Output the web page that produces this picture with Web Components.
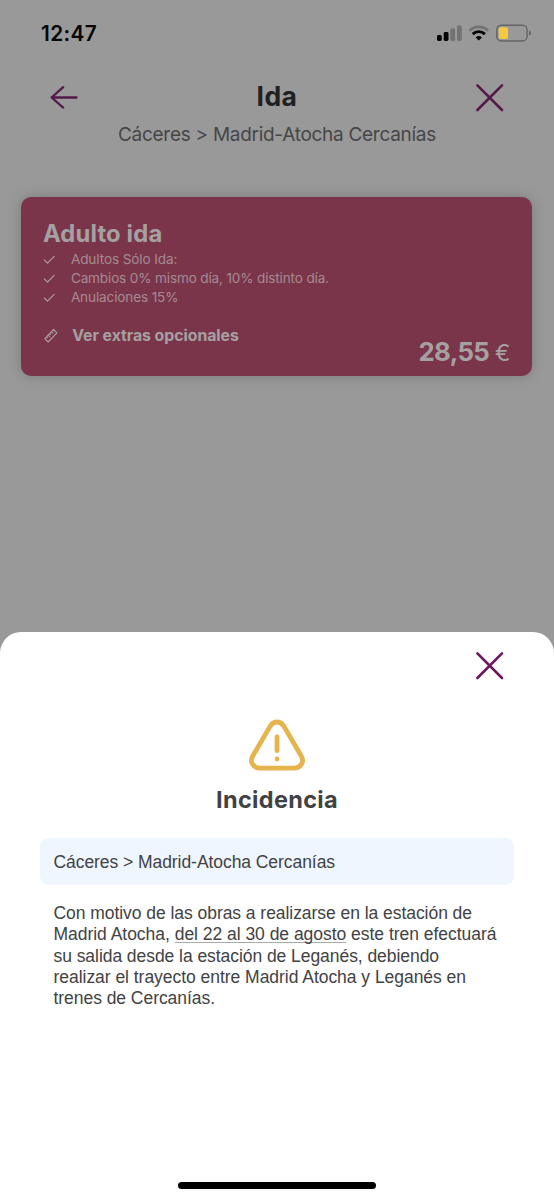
<!DOCTYPE html>
<html lang="es">
<head>
<meta charset="utf-8">
<title>Ida</title>
<style>
html,body{margin:0;height:1200px;overflow:hidden;background:#999}
body{font-family:Inter,"Liberation Sans",sans-serif}
</style>
</head>
<body>
<trip-screen></trip-screen>
<script>
const define=(name,html,setup)=>{
  const t=document.createElement('template');
  t.innerHTML=html;
  customElements.define(name,class extends HTMLElement{
    connectedCallback(){
      if(this.shadowRoot)return;
      this.attachShadow({mode:'open'}).append(t.content.cloneNode(true));
      if(setup)setup(this);
    }
  });
};

// Single line of text, tracked so that it fills the given measure.
define('tracked-text',`<style>:host{display:block;white-space:nowrap;width:max-content}span{display:inline-block}</style><span><slot></slot></span>`,el=>{
  const target=+el.getAttribute('measure');
  const span=el.shadowRoot.querySelector('span');
  const w=span.getBoundingClientRect().width;
  const n=[...el.textContent].length;
  span.style.letterSpacing=(target-w)/n+'px';
});

define('close-icon',`<style>:host{display:block;width:30px;height:30px}svg{display:block}</style>
<svg width="30" height="30" viewBox="0 0 30 30" fill="none" stroke="currentColor" stroke-width="2.6" stroke-linecap="round"><path d="M2.4 2.4 27 27M27 2.4 2.4 27"/></svg>`);

define('status-bar',`<style>
:host{display:flex;justify-content:space-between;height:68px;box-sizing:border-box;padding:21px 23px 0 41px;color:#060606}
.time{font-size:20.8px;font-weight:600;line-height:25px}
svg{display:block}
</style>
<tracked-text class="time" measure="56">12:47</tracked-text>
<svg width="96" height="26" viewBox="0 0 96 26" fill="none">
<g fill="#050505"><rect x="2" y="14" width="4.8" height="6" rx="1.4"/><rect x="8.7" y="11" width="4.8" height="9" rx="1.4"/></g>
<g fill="#737373"><rect x="15.3" y="7.6" width="4.8" height="12.4" rx="1.4"/><rect x="22" y="4.4" width="4.8" height="15.6" rx="1.4"/></g>
<path d="M34.6 9.6A13.3 13.3 0 0 1 53 9.6" stroke="#737373" stroke-width="2.7"/>
<path d="M37.7 13.1A8.7 8.7 0 0 1 49.9 13.1" stroke="#050505" stroke-width="2.9"/>
<path d="M40.7 16.4A4.5 4.5 0 0 1 46.9 16.4L43.8 19.6Z" fill="#050505"/>
<rect x="61.7" y="4.2" width="30.4" height="15.8" rx="4.7" stroke="#646464" stroke-width="1.4"/>
<rect x="63.8" y="6.3" width="9.2" height="11.7" rx="2" fill="#f5c93d"/>
<path d="M94 9.4Q96 10.2 96 12.1T94 14.8Z" fill="#646464"/>
</svg>`);

define('trip-header',`<style>
:host{display:block;height:129px;box-sizing:border-box;color:#202022}
.row{display:grid;grid-template-columns:1fr auto 1fr;align-items:center;height:58px;padding:0 49px}
.back{display:block}
close-icon{justify-self:end;color:#55194b;margin-top:1px}
.title{font-size:26.5px;line-height:34px;font-weight:750;align-self:start;margin-top:11px}
.route{font-size:19px;line-height:24px;margin:-3px auto 0;color:#464648}
</style>
<div class="row">
<svg class="back" width="30" height="26" viewBox="0 0 30 26" fill="none" stroke="#55194b" stroke-width="2.3" stroke-linecap="round" stroke-linejoin="round"><path d="M27.5 13.5H2.6M14.2 3.2 2.6 13.5 14.2 23.6"/></svg>
<tracked-text class="title" measure="41">Ida</tracked-text>
<close-icon></close-icon>
</div>
<tracked-text class="route" measure="318">Cáceres &gt; Madrid-Atocha Cercanías</tracked-text>`);

define('fare-condition',`<style>
:host{display:flex;height:19px;line-height:19px;font-size:13.6px;color:#a58a93}
svg{display:block;width:28px;margin-top:4px}
</style>
<svg width="28" height="12" viewBox="0 0 28 12" fill="none" stroke="#b0a0a5" stroke-width="1.1" stroke-linecap="round" stroke-linejoin="round"><path d="M1.2 5.8 4.5 9.2 11.2 2.4"/></svg>
<slot></slot>`);

define('fare-card',`<style>
:host{display:block;box-sizing:border-box;width:511px;height:179px;margin-left:21.4px;padding:21px 21.5px 0;border-radius:10px;background:#7b354a;color:#a5a0a2;box-shadow:0 0 13px rgba(0,0,0,.2)}
.name{font-size:23.8px;line-height:31px;font-weight:700;margin-bottom:1px}
.foot{display:flex;align-items:flex-start;padding-top:19px}
.foot svg{margin:2px 14.4px 0 1px}
.extras{font-size:15.8px;line-height:20px;font-weight:700}
.price{display:flex;margin:9.6px .5px 0 auto;line-height:32px;align-items:baseline}
.amount{font-size:25.8px;font-weight:700}
.euro{font-size:23px;margin-left:6px}
</style>
<tracked-text class="name" measure="119.5">Adulto ida</tracked-text>
<fare-condition><tracked-text measure="106.5">Adultos Sólo Ida:</tracked-text></fare-condition>
<fare-condition><tracked-text measure="258">Cambios 0% mismo día, 10% distinto día.</tracked-text></fare-condition>
<fare-condition><tracked-text measure="107.5">Anulaciones 15%</tracked-text></fare-condition>
<div class="foot">
<svg width="14" height="16" viewBox="0 0 14 16" fill="none" stroke="#aaa0a4" stroke-width="1.1" stroke-linejoin="round" stroke-linecap="round"><path d="M9.6 1.4 12.9 4.8 4.1 14 .8 10.7ZM7.5 3.7 9 5.2M5.8 5.5 6.7 6.4M4.1 7.2 5.6 8.7M2.4 9 3.3 9.9"/></svg>
<tracked-text class="extras" measure="166.5">Ver extras opcionales</tracked-text>
<div class="price"><tracked-text class="amount" measure="70.5">28,55</tracked-text><span class="euro">€</span></div>
</div>`);

define('incident-sheet',`<style>
:host{display:flex;flex-direction:column;box-sizing:border-box;height:568px;padding:19px 40px 0;border-radius:21px 21px 0 0;background:#fff;color:#424244}
close-icon{align-self:flex-end;margin-right:9.5px;color:#6d155e}
.warn{display:block;align-self:center;margin-top:38px}
.title{align-self:center;font-size:23.5px;line-height:30px;font-weight:700;margin-top:12px}
.route{box-sizing:border-box;width:474px;height:47.5px;margin-top:22.5px;padding:0 13.5px;line-height:49px;border-radius:9px;background:#eff6ff}
.route,.body{font-family:"Liberation Sans",Arial,sans-serif;font-size:17.5px}
.body{padding:17.8px 13.5px 0;line-height:21.4px}
.line{display:flex;height:21.4px}
u{text-decoration-color:#aaa;text-decoration-thickness:1px;text-underline-offset:2px;text-decoration-skip-ink:none}
.home{flex:none;width:198px;height:7px;border-radius:4px;background:#000;margin:auto auto 11px}
</style>
<close-icon></close-icon>
<svg class="warn" width="58" height="54" viewBox="0 0 58 54" fill="none" stroke="#e5b44d" stroke-width="4.8" stroke-linecap="round" stroke-linejoin="round"><path d="M22.5 6.6Q25 3 29 3T35.5 6.6L53.4 37.3Q55.8 41.8 53.4 45.2Q51 49.2 46.4 49.2H11.6Q7 49.2 4.6 45.2Q2.2 41.8 4.6 37.3Z"/><path d="M29 17.9V31.7"/><circle cx="29" cy="40" r="2.4" fill="#e5b44d" stroke="none"/></svg>
<tracked-text class="title" measure="122">Incidencia</tracked-text>
<div class="route"><tracked-text measure="281.5">Cáceres &gt; Madrid-Atocha Cercanías</tracked-text></div>
<div class="body">
<tracked-text class="line" measure="418.5">Con motivo de las obras a realizarse en la estación de</tracked-text>
<tracked-text class="line" measure="443">Madrid Atocha, <u>del 22 al 30 de agosto</u> este tren efectuará</tracked-text>
<tracked-text class="line" measure="385.5">su salida desde la estación de Leganés, debiendo</tracked-text>
<tracked-text class="line" measure="412.5">realizar el trayecto entre Madrid Atocha y Leganés en</tracked-text>
<tracked-text class="line" measure="161.5">trenes de Cercanías.</tracked-text>
</div>
<div class="home"></div>`);

define('trip-screen',`<style>
:host{display:flex;flex-direction:column;width:554px;height:1200px;background:#999}
incident-sheet{margin-top:auto}
</style>
<status-bar></status-bar>
<trip-header></trip-header>
<fare-card></fare-card>
<incident-sheet></incident-sheet>`);
</script>
</body>
</html>
